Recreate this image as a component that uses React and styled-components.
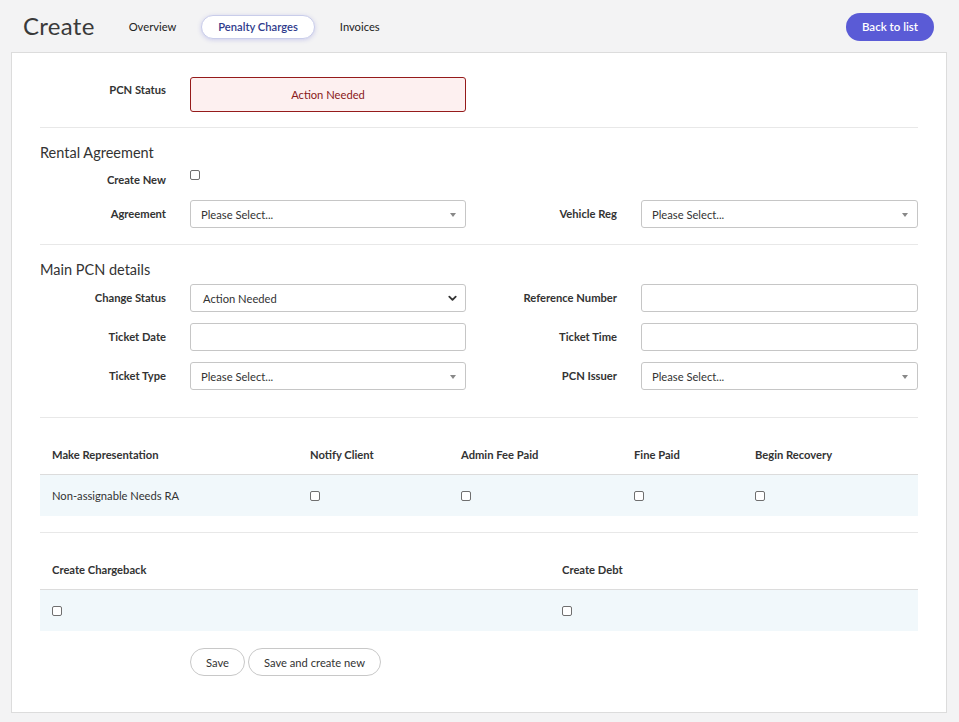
import React from 'react';
import styled, { createGlobalStyle } from 'styled-components';

const GlobalStyle = createGlobalStyle`
  html, body {
    margin: 0;
    padding: 0;
    background: #f3f3f4;
    font-family: Lato, "Open Sans", Arial, sans-serif;
    color: #333;
  }
  * { box-sizing: border-box; }
`;

const Page = styled.div`
  width: 959px;
  min-height: 722px;
  padding: 0 12px 10px 11px;
`;

const Header = styled.header`
  height: 52px;
  display: flex;
  align-items: center;
  padding: 1px 13px 0 12px;
`;

const Title = styled.h1`
  margin: 0 17px 2px 0;
  font-size: 24px;
  font-weight: 400;
  color: #3a3a3a;
  letter-spacing: 0.3px;
`;

const Tabs = styled.nav`
  display: flex;
  gap: 8px;
  flex: 1;
`;

const Tab = styled.button`
  height: 24px;
  padding: 0 16px;
  border-radius: 12px;
  font-family: inherit;
  font-size: 11.2px;
  cursor: pointer;
  background: ${({ $active }) => ($active ? '#fff' : 'transparent')};
  color: ${({ $active }) => ($active ? '#2e3a8c' : '#222')};
  font-weight: ${({ $active }) => ($active ? 600 : 400)};
  border: 1px solid ${({ $active }) => ($active ? '#c9cdea' : 'transparent')};
  box-shadow: ${({ $active }) => ($active ? '0 1px 4px rgba(90, 91, 213, 0.25)' : 'none')};
`;

const PrimaryButton = styled.button`
  height: 28px;
  padding: 0 16px;
  border: none;
  border-radius: 14px;
  background: #5a5bd6;
  color: #fff;
  font-family: inherit;
  font-size: 11.5px;
  font-weight: 600;
  cursor: pointer;
`;

const Card = styled.main`
  background: #fff;
  border: 1px solid #dcdcdc;
  padding: 24px 28px 36px;
`;

const Divider = styled.hr`
  border: none;
  border-top: 1px solid #e8e8e8;
  margin: ${({ $top = 16 }) => $top}px 0 16px;
`;

const SectionTitle = styled.h2`
  margin: 13px 0 5px;
  font-size: 14.5px;
  line-height: 18px;
  font-weight: 400;
  color: #333;
`;

const FormRow = styled.div`
  display: grid;
  grid-template-columns: 126px 276px 127px 277px;
  column-gap: 24px;
  align-items: center;
  margin-top: ${({ $top = 0 }) => $top}px;
`;

const Label = styled.label`
  text-align: right;
  font-size: 11.2px;
  font-weight: 700;
  color: #333;
  line-height: 18px;
  align-self: ${({ $top }) => ($top ? 'start' : 'center')};
  padding-top: ${({ $top }) => ($top ? '4px' : '0')};
`;

const StatusBox = styled.div`
  height: 35px;
  display: flex;
  align-items: center;
  justify-content: center;
  background: #fdf0f0;
  border: 1px solid #951b1b;
  border-radius: 3px;
  color: #8a1919;
  font-size: 11.2px;
`;

const Field = styled.div`
  position: relative;
  height: 28px;
  border: 1px solid #c6c6c6;
  border-radius: 3px;
  background: #fff;
  display: flex;
  align-items: center;
  padding: 0 10px;
  font-size: 11.2px;
  color: #333;
`;

const Input = styled.input`
  height: 28px;
  width: 100%;
  border: 1px solid #c6c6c6;
  border-radius: 3px;
  padding: 0 10px;
  font-family: inherit;
  font-size: 11.2px;
`;

const Caret = styled.span`
  position: absolute;
  right: 9px;
  top: 12px;
  border-top: 4px solid #888;
  border-left: 3px solid transparent;
  border-right: 3px solid transparent;
`;

const Chevron = styled.svg`
  position: absolute;
  right: 7px;
  top: 8px;
`;

const Check = styled.input.attrs({ type: 'checkbox' })`
  appearance: none;
  -webkit-appearance: none;
  width: 10px;
  height: 10px;
  margin: 0;
  border: 1px solid #6f6f6f;
  border-radius: 2px;
  background: #fff;
  align-self: ${({ $top }) => ($top ? 'start' : 'center')};
  margin-top: ${({ $top }) => ($top ? '3px' : '0')};
`;

const CheckRow = styled(FormRow)`
  height: 21px;
  align-items: start;
  margin-bottom: 12px;
`;

const Table = styled.div`
  display: grid;
  grid-template-columns: ${({ $cols }) => $cols};
`;

const HeadCell = styled.div`
  height: 41px;
  padding: 0 12px;
  display: flex;
  align-items: center;
  font-size: 11.2px;
  font-weight: 700;
  color: #333;
  border-bottom: 1px solid #dcdcdc;
`;

const BodyCell = styled.div`
  height: 41px;
  padding: 0 12px;
  display: flex;
  align-items: center;
  font-size: 11.2px;
  color: #333;
  background: #f1f8fb;
`;

const Actions = styled.div`
  display: flex;
  gap: 3px;
  margin: 17px 0 0 150px;
`;

const OutlineButton = styled.button`
  height: 28px;
  padding: 0 15px;
  border: 1px solid #c8c8c8;
  border-radius: 14px;
  background: #fff;
  font-family: inherit;
  font-size: 11.2px;
  color: #333;
  cursor: pointer;
`;

const PleaseSelect = () => (
  <Field>
    Please Select...
    <Caret />
  </Field>
);

const StatusSelect = () => (
  <Field style={{ paddingLeft: 12 }}>
    Action Needed
    <Chevron width="11" height="11" viewBox="0 0 24 24" fill="none" stroke="#333" strokeWidth="4" strokeLinecap="round" strokeLinejoin="round">
      <path d="M5 8l7 7 7-7" />
    </Chevron>
  </Field>
);

const repCols = ['Make Representation', 'Notify Client', 'Admin Fee Paid', 'Fine Paid', 'Begin Recovery'];

export default function App() {
  return (
    <>
      <GlobalStyle />
      <Page>
        <Header>
          <Title>Create</Title>
          <Tabs>
            <Tab>Overview</Tab>
            <Tab $active>Penalty Charges</Tab>
            <Tab>Invoices</Tab>
          </Tabs>
          <PrimaryButton>Back to list</PrimaryButton>
        </Header>

        <Card>
          <FormRow>
            <Label $top>PCN Status</Label>
            <StatusBox>Action Needed</StatusBox>
          </FormRow>

          <Divider $top={15} />
          <SectionTitle>Rental Agreement</SectionTitle>
          <CheckRow>
            <Label $top>Create New</Label>
            <Check $top />
          </CheckRow>
          <FormRow>
            <Label>Agreement</Label>
            <PleaseSelect />
            <Label>Vehicle Reg</Label>
            <PleaseSelect />
          </FormRow>

          <Divider $top={16} />
          <SectionTitle>Main PCN details</SectionTitle>
          <FormRow>
            <Label>Change Status</Label>
            <StatusSelect />
            <Label>Reference Number</Label>
            <Input />
          </FormRow>
          <FormRow $top={11}>
            <Label>Ticket Date</Label>
            <Input />
            <Label>Ticket Time</Label>
            <Input />
          </FormRow>
          <FormRow $top={11}>
            <Label>Ticket Type</Label>
            <PleaseSelect />
            <Label>PCN Issuer</Label>
            <PleaseSelect />
          </FormRow>

          <Divider $top={27} />
          <Table $cols="258px 151px 173px 121px 1fr">
            {repCols.map((c) => (
              <HeadCell key={c}>{c}</HeadCell>
            ))}
            <BodyCell>Non-assignable Needs RA</BodyCell>
            {repCols.slice(1).map((c) => (
              <BodyCell key={c}>
                <Check />
              </BodyCell>
            ))}
          </Table>

          <Divider />
          <Table $cols="510px 1fr">
            <HeadCell>Create Chargeback</HeadCell>
            <HeadCell>Create Debt</HeadCell>
            <BodyCell>
              <Check />
            </BodyCell>
            <BodyCell>
              <Check />
            </BodyCell>
          </Table>

          <Actions>
            <OutlineButton>Save</OutlineButton>
            <OutlineButton>Save and create new</OutlineButton>
          </Actions>
        </Card>
      </Page>
    </>
  );
}
